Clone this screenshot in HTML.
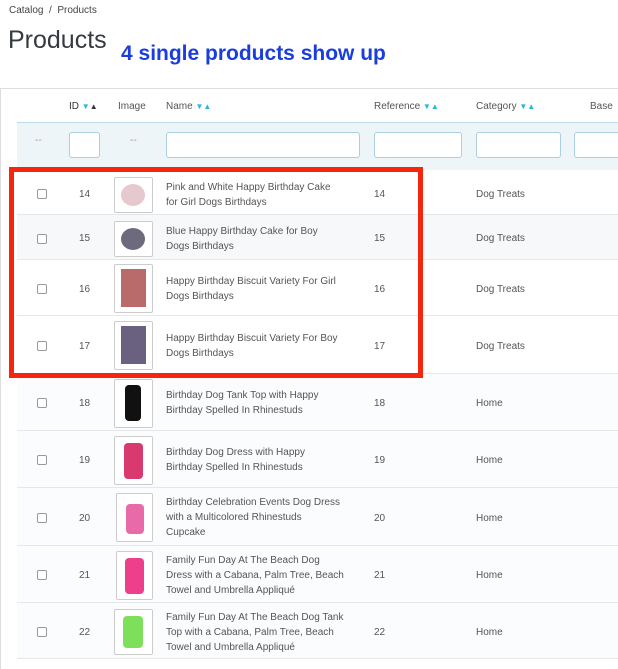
<!DOCTYPE html><html><head><meta charset="utf-8"><style>
body{margin:0;width:618px;height:662px;overflow:hidden;background:#fff;font-family:"Liberation Sans",sans-serif;color:#363a41;position:relative}
.a{position:absolute}
.t{font-size:10px;color:#555;line-height:15px}
.row{position:absolute;left:17px;right:0;border-bottom:1px solid #e4e8eb;background:#fbfcfd}
.cb{position:absolute;left:37px;width:8px;height:8px;border:1px solid #999;border-radius:2px;background:#fff}
.img{position:absolute;left:114px;width:37px;border:1px solid #ccc;border-radius:2px;background:#fff}
.in{position:absolute;top:132px;height:26px;border:1px solid #a9cfe0;border-radius:3px;background:#fff;box-sizing:border-box}
.ar{color:#25b9d7;font-size:8px}
</style></head><body>
<div class="a" style="left:9px;top:5px;font-size:10px;color:#444">Catalog&nbsp; /&nbsp; Products</div>
<div class="a" style="left:8px;top:26px;font-size:25px;color:#363a41">Products</div>
<div class="a" style="left:121px;top:42px;font-size:21px;font-weight:bold;color:#1a3de0">4 single products show up</div>
<div class="a" style="left:0;top:88px;width:620px;height:580px;border-top:1px solid #ddd;border-left:1px solid #ddd"></div>
<div class="a t" style="left:69px;top:99px;color:#333">ID <span class="ar">▼</span><span style="font-size:8px">▲</span></div>
<div class="a t" style="left:118px;top:99px">Image</div>
<div class="a t" style="left:166px;top:99px">Name <span class="ar">▼▲</span></div>
<div class="a t" style="left:374px;top:99px">Reference <span class="ar">▼▲</span></div>
<div class="a t" style="left:476px;top:99px">Category <span class="ar">▼▲</span></div>
<div class="a t" style="left:590px;top:99px">Base</div>
<div class="a" style="left:17px;top:122px;right:0;height:48px;background:#eef5f9;border-top:1px solid #bcd9e6"></div>
<div class="a t" style="left:35px;top:133px;color:#999">--</div>
<div class="a t" style="left:130px;top:133px;color:#999">--</div>
<div class="in" style="left:69px;width:31px"></div>
<div class="in" style="left:166px;width:194px"></div>
<div class="in" style="left:374px;width:88px"></div>
<div class="in" style="left:476px;width:85px"></div>
<div class="in" style="left:574px;width:60px"></div>

<div class="row" style="top:170px;height:44px;background:#fff"></div>
<div class="row" style="top:215px;height:44px;background:#f6f8fa"></div>
<div class="row" style="top:260px;height:55px;background:#fff"></div>
<div class="row" style="top:316px;height:57px;background:#fff"></div>
<div class="row" style="top:374px;height:56px"></div>
<div class="row" style="top:431px;height:56px"></div>
<div class="row" style="top:488px;height:57px"></div>
<div class="row" style="top:546px;height:56px"></div>
<div class="row" style="top:603px;height:55px"></div>

<div class="cb" style="top:189px"></div><div class="a t" style="left:79px;top:187px">14</div>
<div class="img" style="top:177px;height:34px"><div class="a" style="left:6px;top:6px;width:24px;height:22px;border-radius:50%;background:#e6c9cf"></div></div>
<div class="a t" style="left:166px;top:180px">Pink and White Happy Birthday Cake<br>for Girl Dogs Birthdays</div>
<div class="a t" style="left:374px;top:187px">14</div><div class="a t" style="left:476px;top:187px">Dog Treats</div>

<div class="cb" style="top:234px"></div><div class="a t" style="left:79px;top:231px">15</div>
<div class="img" style="top:221px;height:34px"><div class="a" style="left:6px;top:6px;width:24px;height:22px;border-radius:50%;background:#6e6a7e"></div></div>
<div class="a t" style="left:166px;top:224px">Blue Happy Birthday Cake for Boy<br>Dogs Birthdays</div>
<div class="a t" style="left:374px;top:231px">15</div><div class="a t" style="left:476px;top:231px">Dog Treats</div>

<div class="cb" style="top:284px"></div><div class="a t" style="left:79px;top:282px">16</div>
<div class="img" style="top:264px;height:47px"><div class="a" style="left:6px;top:4px;width:25px;height:38px;background:#b96a6a"></div></div>
<div class="a t" style="left:166px;top:274px">Happy Birthday Biscuit Variety For Girl<br>Dogs Birthdays</div>
<div class="a t" style="left:374px;top:282px">16</div><div class="a t" style="left:476px;top:282px">Dog Treats</div>

<div class="cb" style="top:341px"></div><div class="a t" style="left:79px;top:339px">17</div>
<div class="img" style="top:321px;height:47px"><div class="a" style="left:6px;top:4px;width:25px;height:38px;background:#6a6080"></div></div>
<div class="a t" style="left:166px;top:331px">Happy Birthday Biscuit Variety For Boy<br>Dogs Birthdays</div>
<div class="a t" style="left:374px;top:339px">17</div><div class="a t" style="left:476px;top:339px">Dog Treats</div>

<div class="cb" style="top:398px"></div><div class="a t" style="left:79px;top:396px">18</div>
<div class="img" style="top:379px;height:47px"><div class="a" style="left:10px;top:5px;width:16px;height:36px;background:#111;border-radius:4px"></div></div>
<div class="a t" style="left:166px;top:388px">Birthday Dog Tank Top with Happy<br>Birthday Spelled In Rhinestuds</div>
<div class="a t" style="left:374px;top:396px">18</div><div class="a t" style="left:476px;top:396px">Home</div>

<div class="cb" style="top:455px"></div><div class="a t" style="left:79px;top:453px">19</div>
<div class="img" style="top:436px;height:47px"><div class="a" style="left:9px;top:6px;width:19px;height:36px;background:#d8396e;border-radius:4px"></div></div>
<div class="a t" style="left:166px;top:445px">Birthday Dog Dress with Happy<br>Birthday Spelled In Rhinestuds</div>
<div class="a t" style="left:374px;top:453px">19</div><div class="a t" style="left:476px;top:453px">Home</div>

<div class="cb" style="top:513px"></div><div class="a t" style="left:79px;top:511px">20</div>
<div class="img" style="top:493px;height:47px;left:116px;width:35px"><div class="a" style="left:9px;top:10px;width:18px;height:30px;background:#e96aa8;border-radius:4px"></div></div>
<div class="a t" style="left:166px;top:495px">Birthday Celebration Events Dog Dress<br>with a Multicolored Rhinestuds<br>Cupcake</div>
<div class="a t" style="left:374px;top:511px">20</div><div class="a t" style="left:476px;top:511px">Home</div>

<div class="cb" style="top:570px"></div><div class="a t" style="left:79px;top:568px">21</div>
<div class="img" style="top:551px;height:47px;left:116px;width:35px"><div class="a" style="left:8px;top:6px;width:19px;height:36px;background:#ee3f8c;border-radius:4px"></div></div>
<div class="a t" style="left:166px;top:553px">Family Fun Day At The Beach Dog<br>Dress with a Cabana, Palm Tree, Beach<br>Towel and Umbrella Appliqué</div>
<div class="a t" style="left:374px;top:568px">21</div><div class="a t" style="left:476px;top:568px">Home</div>

<div class="cb" style="top:627px"></div><div class="a t" style="left:79px;top:625px">22</div>
<div class="img" style="top:609px;height:44px"><div class="a" style="left:8px;top:6px;width:20px;height:32px;background:#7ee05a;border-radius:4px"></div></div>
<div class="a t" style="left:166px;top:610px">Family Fun Day At The Beach Dog Tank<br>Top with a Cabana, Palm Tree, Beach<br>Towel and Umbrella Appliqué</div>
<div class="a t" style="left:374px;top:625px">22</div><div class="a t" style="left:476px;top:625px">Home</div>

<div class="a" style="left:9px;top:167px;width:404px;height:201px;border:5px solid #f4260e"></div>
</body></html>
